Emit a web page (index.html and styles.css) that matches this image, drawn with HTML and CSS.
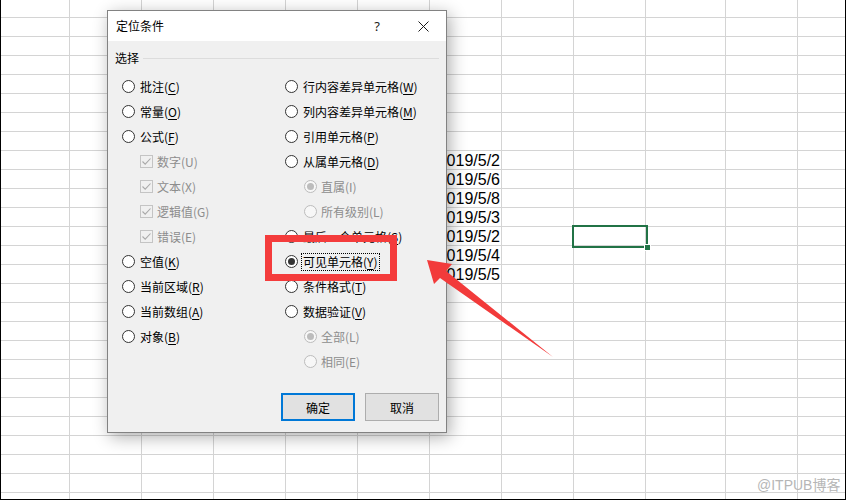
FILE: index.html
```html
<!DOCTYPE html>
<html lang="zh-CN">
<head>
<meta charset="utf-8">
<title>定位条件</title>
<link rel="stylesheet" href="styles.css">
</head>
<body>
<div class="page">
  <div class="sheet">
    <div class="dates">
      <div class="d">2019/5/2</div>
      <div class="d">2019/5/6</div>
      <div class="d">2019/5/8</div>
      <div class="d">2019/5/3</div>
      <div class="d">2019/5/2</div>
      <div class="d">2019/5/4</div>
      <div class="d">2019/5/5</div>
    </div>
    <div class="sel"><span class="handle"></span></div>
  </div>

  <div class="dialog">
    <div class="titlebar">
      <div class="title">定位条件</div>
      <div class="tbtn help">?</div>
      <div class="tbtn close">
        <svg width="11" height="11" viewBox="0 0 11 11"><path d="M0.5 0.5L10.5 10.5M10.5 0.5L0.5 10.5" stroke="#1a1a1a" stroke-width="1" fill="none"/></svg>
      </div>
    </div>
    <div class="body">
      <div class="group"><span class="glabel">选择</span><span class="gline"></span></div>
      <div class="opts">
        <div class="col">
          <div class="opt"><span class="rb"></span><span>批注(<u>C</u>)</span></div>
          <div class="opt"><span class="rb"></span><span>常量(<u>O</u>)</span></div>
          <div class="opt"><span class="rb"></span><span>公式(<u>F</u>)</span></div>
          <div class="opt sub dis"><span class="cb"><svg width="11" height="11" viewBox="0 0 11 11"><path d="M1.5 5.5L4.2 8.2L9.5 2.5" stroke="#a9a9a9" stroke-width="1.1" fill="none"/></svg></span><span>数字(U)</span></div>
          <div class="opt sub dis"><span class="cb"><svg width="11" height="11" viewBox="0 0 11 11"><path d="M1.5 5.5L4.2 8.2L9.5 2.5" stroke="#a9a9a9" stroke-width="1.1" fill="none"/></svg></span><span>文本(X)</span></div>
          <div class="opt sub dis"><span class="cb"><svg width="11" height="11" viewBox="0 0 11 11"><path d="M1.5 5.5L4.2 8.2L9.5 2.5" stroke="#a9a9a9" stroke-width="1.1" fill="none"/></svg></span><span>逻辑值(G)</span></div>
          <div class="opt sub dis"><span class="cb"><svg width="11" height="11" viewBox="0 0 11 11"><path d="M1.5 5.5L4.2 8.2L9.5 2.5" stroke="#a9a9a9" stroke-width="1.1" fill="none"/></svg></span><span>错误(E)</span></div>
          <div class="opt"><span class="rb"></span><span>空值(<u>K</u>)</span></div>
          <div class="opt"><span class="rb"></span><span>当前区域(<u>R</u>)</span></div>
          <div class="opt"><span class="rb"></span><span>当前数组(<u>A</u>)</span></div>
          <div class="opt"><span class="rb"></span><span>对象(<u>B</u>)</span></div>
        </div>
        <div class="col">
          <div class="opt"><span class="rb"></span><span>行内容差异单元格(<u>W</u>)</span></div>
          <div class="opt"><span class="rb"></span><span>列内容差异单元格(<u>M</u>)</span></div>
          <div class="opt"><span class="rb"></span><span>引用单元格(<u>P</u>)</span></div>
          <div class="opt"><span class="rb"></span><span>从属单元格(<u>D</u>)</span></div>
          <div class="opt rsub dis"><span class="rb on"></span><span>直属(I)</span></div>
          <div class="opt rsub dis"><span class="rb"></span><span>所有级别(L)</span></div>
          <div class="opt"><span class="rb"></span><span>最后一个单元格(<u>S</u>)</span></div>
          <div class="opt"><span class="rb on"></span><span class="focus">可见单元格(<u>Y</u>)</span></div>
          <div class="opt"><span class="rb"></span><span>条件格式(<u>T</u>)</span></div>
          <div class="opt"><span class="rb"></span><span>数据验证(<u>V</u>)</span></div>
          <div class="opt rsub dis"><span class="rb on"></span><span>全部(L)</span></div>
          <div class="opt rsub dis"><span class="rb"></span><span>相同(E)</span></div>
        </div>
      </div>
      <div class="btns">
        <div class="btn def">确定</div>
        <div class="btn">取消</div>
      </div>
    </div>
  </div>

  <div class="mark"></div>
  <svg class="arrow" width="846" height="500" viewBox="0 0 846 500">
    <polygon points="427,260 452,264 446,271 553,357 440,278 434,284" fill="#f23b3b"/>
  </svg>
  <div class="wm">@ITPUB博客</div>
</div>
</body>
</html>
```
FILE: styles.css
```css
html, body {
  margin: 0;
  padding: 0;
  background: #fff;
}

.page {
  position: relative;
  width: 846px;
  height: 500px;
  overflow: hidden;
  font-family: "Noto Sans CJK SC", "Noto Sans", sans-serif;
}

/* ---------- spreadsheet ---------- */
.sheet {
  box-sizing: border-box;
  width: 846px;
  height: 500px;
  border-left: 1px solid #000;
  border-right: 1px solid #000;
  border-bottom: 1px solid #000;
  display: grid;
  grid-template-columns: 69px repeat(8, 72px) 80px 72px 47px;
  grid-template-rows: 18px repeat(26, 19px);
  overflow: hidden;
  background-origin: border-box;
  background-repeat: no-repeat;
  background-image:
    linear-gradient(#d4d4d4, #d4d4d4),
    linear-gradient(#d4d4d4, #d4d4d4),
    linear-gradient(#d4d4d4, #d4d4d4),
    linear-gradient(#d4d4d4, #d4d4d4),
    linear-gradient(#d4d4d4, #d4d4d4),
    linear-gradient(#d4d4d4, #d4d4d4),
    linear-gradient(#d4d4d4, #d4d4d4),
    linear-gradient(#d4d4d4, #d4d4d4),
    linear-gradient(#d4d4d4, #d4d4d4),
    linear-gradient(#d4d4d4, #d4d4d4),
    linear-gradient(#d4d4d4, #d4d4d4),
    repeating-linear-gradient(to bottom, transparent 0, transparent 17px, #d4d4d4 17px, #d4d4d4 18px, transparent 18px, transparent 19px);
  background-size:
    1px 100%, 1px 100%, 1px 100%, 1px 100%, 1px 100%, 1px 100%,
    1px 100%, 1px 100%, 1px 100%, 1px 100%, 1px 100%,
    100% 100%;
  background-position:
    69px 0, 141px 0, 213px 0, 285px 0, 357px 0, 429px 0,
    501px 0, 573px 0, 645px 0, 725px 0, 797px 0,
    0 0;
}

.dates {
  grid-column: 7;
  grid-row: 9 / span 7;
  display: flex;
  flex-direction: column;
}

.d {
  box-sizing: border-box;
  height: 19px;
  padding-top: 1px;
  line-height: 18px;
  text-align: right;
  padding-right: 2px;
  font-family: "Liberation Sans", Arial, sans-serif;
  font-size: 16px;
  color: #000;
  white-space: nowrap;
}

.sel {
  grid-column: 9;
  grid-row: 13;
  margin: -2px;
  border: 2px solid #217346;
  position: relative;
}

.handle {
  position: absolute;
  right: -4px;
  bottom: -4px;
  width: 5px;
  height: 5px;
  background: #217346;
  box-shadow: 0 0 0 1px #fff;
}

/* ---------- dialog ---------- */
.dialog {
  position: absolute;
  left: 107px;
  top: 10px;
  width: 340px;
  height: 423px;
  box-sizing: border-box;
  border: 1px solid #828282;
  background: #f0f0f0;
  display: flex;
  flex-direction: column;
  box-shadow: 3px 4px 16px rgba(0, 0, 0, 0.32);
  font-size: 12px;
  color: #000;
}

.titlebar {
  height: 30px;
  background: #fff;
  display: flex;
  align-items: center;
}

.title {
  flex: 1;
  padding-left: 8px;
  font-size: 12px;
  line-height: 16px;
}

.tbtn {
  width: 46px;
  height: 30px;
  display: flex;
  align-items: center;
  justify-content: center;
}

.help {
  font-family: "Noto Sans", sans-serif;
  font-size: 13px;
  color: #1a1a1a;
}

.close svg {
  display: block;
}

.body {
  flex: 1;
  display: flex;
  flex-direction: column;
  padding: 9px 7px 11px 7px;
}

.group {
  display: flex;
  align-items: center;
  height: 16px;
}

.glabel {
  line-height: 16px;
}

.gline {
  flex: 1;
  height: 1px;
  background: #dcdcdc;
  margin-left: 4px;
}

.opts {
  margin-top: 8px;
  margin-left: 7px;
  display: grid;
  grid-template-columns: 163px 1fr;
}

.col {
  display: flex;
  flex-direction: column;
}

.opt {
  height: 25px;
  display: flex;
  align-items: center;
  gap: 5px;
  line-height: 16px;
  white-space: nowrap;
}

.opt u {
  text-decoration-thickness: 1px;
  text-underline-offset: 2px;
}

.opt.sub {
  padding-left: 18px;
  gap: 4px;
}

.opt.rsub {
  padding-left: 19px;
  gap: 4px;
}

.opt.dis {
  color: #8d8d8d;
}

.rb {
  box-sizing: border-box;
  width: 13px;
  height: 13px;
  flex: none;
  border: 1px solid #333;
  border-radius: 50%;
  background: #fff;
  display: flex;
  align-items: center;
  justify-content: center;
}

.rb.on::after {
  content: "";
  width: 7px;
  height: 7px;
  border-radius: 50%;
  background: #333;
}

.dis .rb {
  border-color: #bcbcbc;
  background: #f7f7f7;
}

.dis .rb.on::after {
  background: #bcbcbc;
}

.cb {
  box-sizing: border-box;
  width: 13px;
  height: 13px;
  flex: none;
  border: 1px solid #c4c4c4;
  background: #f0f0f0;
  display: flex;
  align-items: center;
  justify-content: center;
}

.cb svg {
  display: block;
}

.focus {
  margin-left: -2px;
  padding: 0 1px;
  border: 1px dotted #000;
}

.btns {
  margin-top: auto;
  display: flex;
  justify-content: flex-end;
  gap: 10px;
}

.btn {
  box-sizing: border-box;
  width: 74px;
  height: 28px;
  border: 1px solid #adadad;
  background: #e1e1e1;
  display: flex;
  align-items: center;
  justify-content: center;
  font-size: 12px;
}

.btn.def {
  border: 2px solid #0078d7;
}

/* ---------- overlays ---------- */
.mark {
  position: absolute;
  left: 265px;
  top: 235px;
  width: 132px;
  height: 46px;
  box-sizing: border-box;
  border: 7px solid #f43c3c;
}

.arrow {
  position: absolute;
  left: 0;
  top: 0;
  pointer-events: none;
}

.wm {
  position: absolute;
  left: 757px;
  top: 476px;
  font-family: "Liberation Sans", "Noto Sans CJK SC", sans-serif;
  font-size: 14px;
  line-height: 18px;
  color: #b6b6b6;
  white-space: nowrap;
}
```
